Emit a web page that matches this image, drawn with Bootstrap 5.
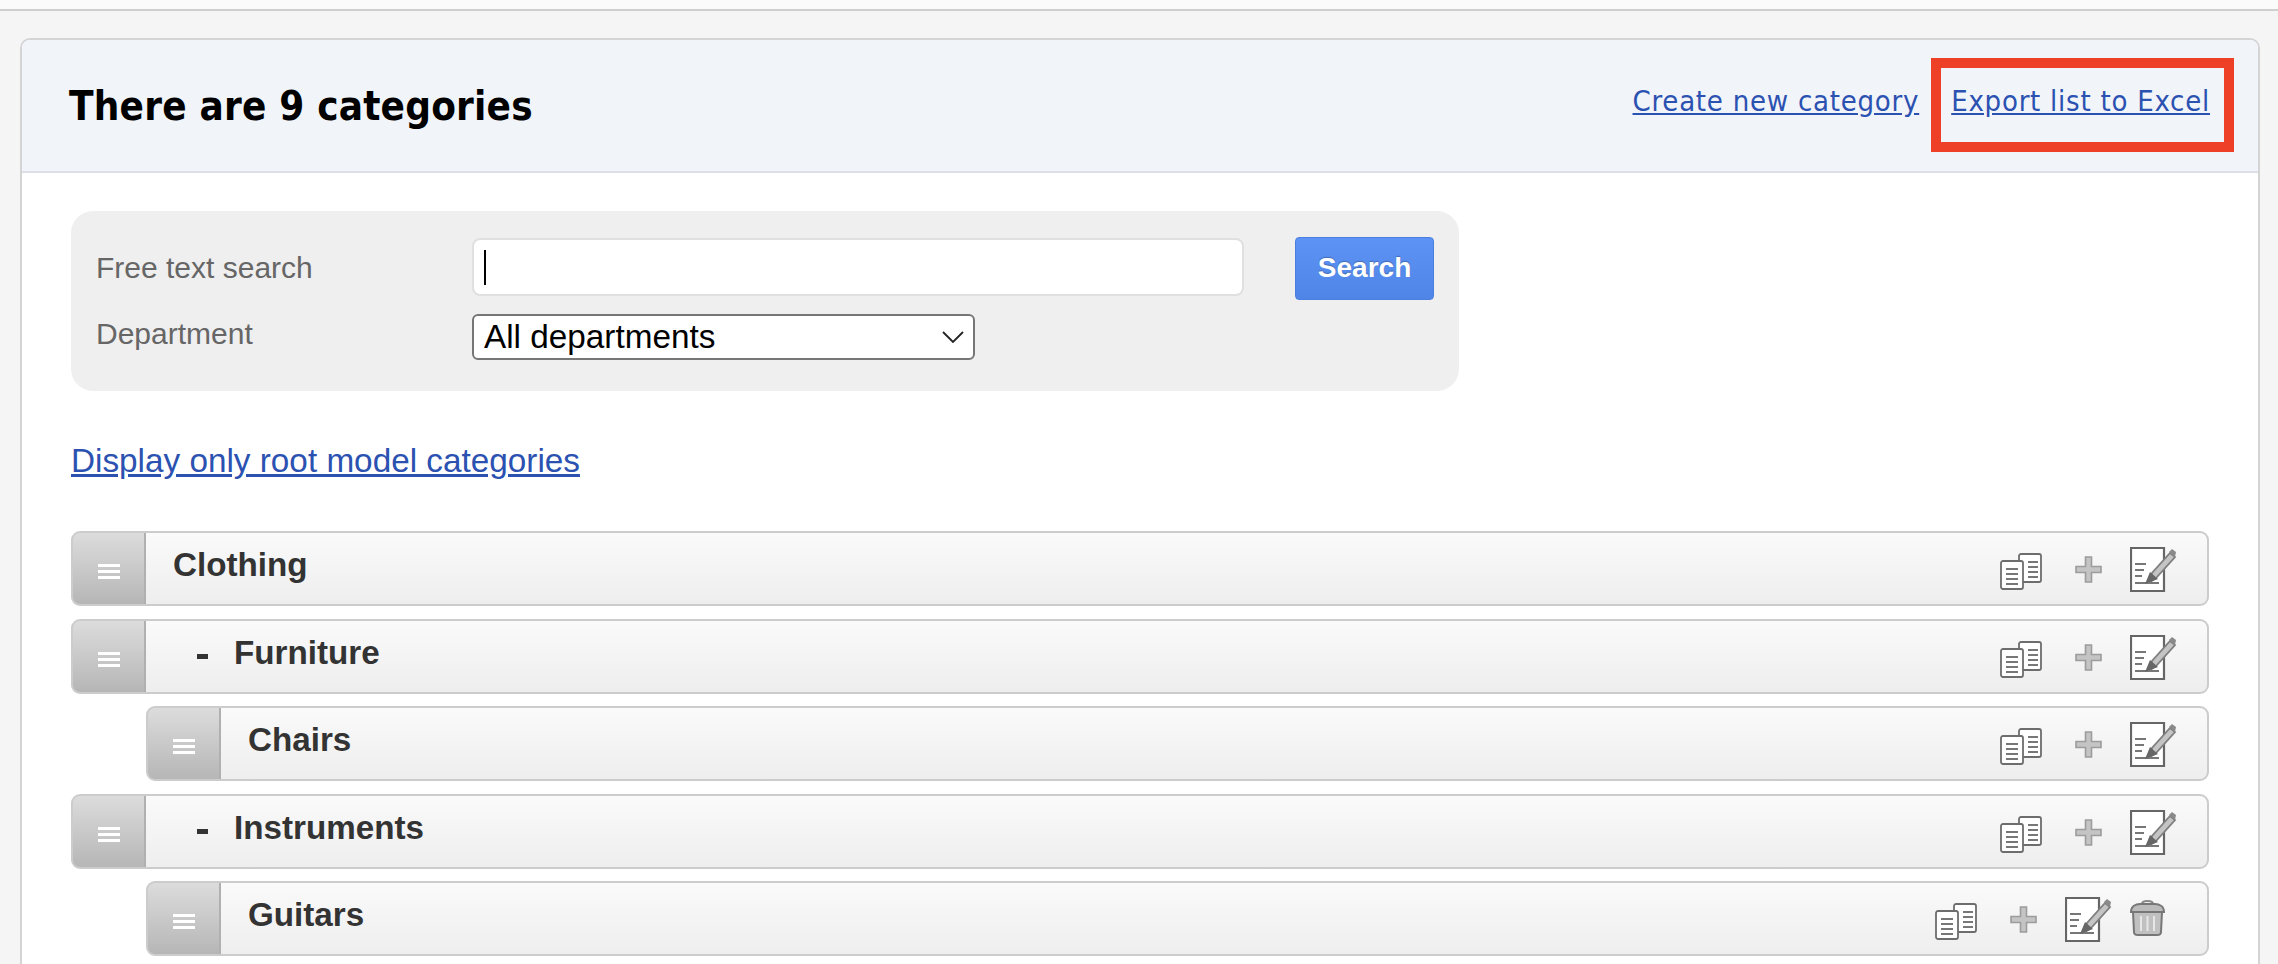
<!DOCTYPE html>
<html lang="en">
<head>
<meta charset="utf-8">
<title>Categories</title>
<link href="https://cdn.jsdelivr.net/npm/bootstrap@5.3.0/dist/css/bootstrap.min.css" rel="stylesheet">
<style>
html,body{height:964px;overflow:hidden}
body{background:#f5f5f5;font-family:"Liberation Sans",Arial,sans-serif;color:#333}
.topstrip{height:11px;background:#fbfbfb;border-bottom:2px solid #cfcfcf}
.shell{margin:27px 18px 0 20px;height:1200px;border:2px solid #d4d4d4;border-radius:10px;background:#fff;--bs-card-inner-border-radius:8px}
.shell>.card-header{height:133px;background:#f1f4f9;border-bottom:2px solid #dcdfe7;padding:0 48px 0 47px;position:relative}
.pagetitle{font-family:"DejaVu Sans Condensed","DejaVu Sans",sans-serif;font-stretch:condensed;font-weight:700;font-size:40px;letter-spacing:.2px;color:#000;margin:0;line-height:1;position:relative}
.headlinks a,.rootlink{color:#2b51b1}
.headlinks{font-family:"DejaVu Sans Condensed","DejaVu Sans",sans-serif;font-stretch:condensed;font-size:29px;letter-spacing:.75px;gap:32px;margin-top:-8px}
.redmark{position:absolute;right:24px;top:18px;width:303px;height:94px;border:10px solid #ee4027;pointer-events:none}
.shell>.card-body{padding:38px 49px 0 49px}
.filterbox{width:1388px;height:180px;background:#efefef;border-radius:22px;padding:27px 25px 0}
.flabel{width:376px;font-size:30px;line-height:34px;color:#666}
.flabel.first{margin-top:13px}
.flabel.second{margin-top:3px}
.fieldwrap{position:relative;width:773px;height:58px;margin-right:51px}
.fieldwrap .form-control{height:58px;border:2px solid #e0e0e0;border-radius:8px}
.caretbar{position:absolute;left:12px;top:12px;width:2px;height:35px;background:#000}
.gobtn{width:139px;height:63px;background:linear-gradient(#5c93f5,#4f85e6);border:1px solid #4a7fe0;border-radius:4px;color:#fff;font-weight:700;font-size:28px;padding:0 0 2px;margin-top:-1px;text-shadow:0 -1px 1px rgba(0,0,0,.25)}
.formgap{margin-bottom:14px}
.deptsel.form-select{width:503px;height:46px;border:2px solid #767676;border-radius:6px;padding:0 10px;font-size:33.300px;line-height:42px;color:#000;background-position:right 8px center;background-size:24px 12px;background-image:url("data:image/svg+xml,%3Csvg xmlns='http://www.w3.org/2000/svg' viewBox='0 0 24 12'%3E%3Cpath d='M2 1l10 10L22 1' fill='none' stroke='%23222' stroke-width='1.8'/%3E%3C/svg%3E")}
.rootlink{display:inline-block;font-size:33.300px;line-height:36px;margin:52px 0 52px}
.treerow{display:flex;height:75px;margin-bottom:12.5px;border:2px solid #ccc;border-radius:9px;background:linear-gradient(#fafafa,#eeeeee);overflow:hidden}
.treerow.subrow{margin-left:75px}
.grip{margin:-2px 0 -2px -2px;flex:0 0 75px;background:linear-gradient(#dcdcdc,#b6b6b6);border:2px solid #b0b0b0;border-radius:9px 0 0 9px;display:flex;flex-direction:column;align-items:center;justify-content:center;gap:3px;padding-top:6px}
.grip i{display:block;width:22px;height:3px;background:#fff}
.treename{font-weight:700;font-size:33.200px;line-height:1;color:#333;padding:0 0 7px 27px;flex-grow:1;display:flex;align-items:center}
.treename.indented{padding-left:51px}
.treename .dashmark{display:inline-block;width:11px;height:5px;background:#333;margin:8px 26px 0 0}
.tools{display:flex;align-items:flex-start;padding:14px 30px 0 0}
.tools svg{display:block;filter:blur(.45px)}
.ic-copy{margin-top:6px;margin-right:33px}
.ic-plus{margin-top:9px;margin-right:28px}
.ic-edit{margin-right:0}
.ic-trash{margin-left:18px;margin-top:2px;margin-right:12px}
</style>
</head>
<body>
<svg width="0" height="0" class="position-absolute">
  <defs>
    <symbol id="s-copy" viewBox="0 0 42 37">
      <rect x="19" y="1" width="22" height="28" rx="2" fill="#fff" stroke="#6d6d6d" stroke-width="1.8"/>
      <path d="M28 9h10M28 14h10M28 19h10M28 24h10" stroke="#777" stroke-width="1.8"/>
      <rect x="1" y="8" width="22" height="28" rx="2" fill="#fff" stroke="#6d6d6d" stroke-width="1.8"/>
      <path d="M6 16h12M6 21h12M6 26h12M6 31h12" stroke="#777" stroke-width="1.8"/>
    </symbol>
    <symbol id="s-plus" viewBox="0 0 27 27">
      <path d="M10.500 1h6v9.500H26v6h-9.500V26h-6v-9.500H1v-6h9.500z" fill="#c4c4c4" stroke="#9c9c9c" stroke-width="1.6"/>
    </symbol>
    <symbol id="s-edit" viewBox="0 0 47 45">
      <path d="M33 1H1v43h33V1z" fill="#fff" stroke="#666" stroke-width="2.2"/>
      <path d="M5 17h11M5 23h9M5 29h7M5 36h24" stroke="#777" stroke-width="1.8"/>
      <path d="M20 35l2-9L40 6l5 4-19 21z" fill="#c4c4c4" stroke="#808080" stroke-width="1.8"/>
      <path d="M15 37l5-12 8 7z" fill="#666"/>
      <path d="M39 5l3-3 4 3-1 5z" fill="#8a8a8a"/>
    </symbol>
    <symbol id="s-trash" viewBox="0 0 35 37">
      <path d="M12 5c0-4 11-4 11 0" fill="none" stroke="#888" stroke-width="2"/>
      <path d="M1 13c0-6 5-8 9-8h15c4 0 9 2 9 8z" fill="#bbb" stroke="#777" stroke-width="2"/>
      <path d="M3 13h29l-1 20c0 2-2 3-4 3H8c-2 0-4-1-4-3z" fill="#c0c0c0" stroke="#777" stroke-width="2"/>
      <path d="M11 17v15M17.500 17v15M24 17v15" stroke="#e6e6e6" stroke-width="2"/>
    </symbol>
  </defs>
</svg>

<div class="topstrip"></div>
<div class="card shell">
  <div class="card-header d-flex justify-content-between align-items-center">
    <h1 class="pagetitle">There are 9 categories</h1>
    <div class="headlinks d-flex">
      <a href="#">Create new category</a>
      <a href="#">Export list to Excel</a>
    </div>
    <span class="redmark"></span>
  </div>
  <div class="card-body">
    <form class="filterbox">
      <div class="d-flex align-items-start formgap">
        <label class="flabel first" for="q">Free text search</label>
        <div class="fieldwrap"><input id="q" class="form-control" type="text"><span class="caretbar"></span></div>
        <button type="button" class="btn gobtn">Search</button>
      </div>
      <div class="d-flex align-items-start">
        <label class="flabel second" for="dept">Department</label>
        <select id="dept" class="form-select deptsel"><option>All departments</option></select>
      </div>
    </form>
    <a class="rootlink" href="#">Display only root model categories</a>

    <div class="treerow">
      <div class="grip"><i></i><i></i><i></i></div>
      <div class="treename">Clothing</div>
      <div class="tools">
        <svg class="ic-copy" width="42" height="37"><use href="#s-copy"/></svg>
        <svg class="ic-plus" width="27" height="27"><use href="#s-plus"/></svg>
        <svg class="ic-edit" width="47" height="45"><use href="#s-edit"/></svg>
      </div>
    </div>
    <div class="treerow">
      <div class="grip"><i></i><i></i><i></i></div>
      <div class="treename indented"><span class="dashmark"></span>Furniture</div>
      <div class="tools">
        <svg class="ic-copy" width="42" height="37"><use href="#s-copy"/></svg>
        <svg class="ic-plus" width="27" height="27"><use href="#s-plus"/></svg>
        <svg class="ic-edit" width="47" height="45"><use href="#s-edit"/></svg>
      </div>
    </div>
    <div class="treerow subrow">
      <div class="grip"><i></i><i></i><i></i></div>
      <div class="treename">Chairs</div>
      <div class="tools">
        <svg class="ic-copy" width="42" height="37"><use href="#s-copy"/></svg>
        <svg class="ic-plus" width="27" height="27"><use href="#s-plus"/></svg>
        <svg class="ic-edit" width="47" height="45"><use href="#s-edit"/></svg>
      </div>
    </div>
    <div class="treerow">
      <div class="grip"><i></i><i></i><i></i></div>
      <div class="treename indented"><span class="dashmark"></span>Instruments</div>
      <div class="tools">
        <svg class="ic-copy" width="42" height="37"><use href="#s-copy"/></svg>
        <svg class="ic-plus" width="27" height="27"><use href="#s-plus"/></svg>
        <svg class="ic-edit" width="47" height="45"><use href="#s-edit"/></svg>
      </div>
    </div>
    <div class="treerow subrow">
      <div class="grip"><i></i><i></i><i></i></div>
      <div class="treename">Guitars</div>
      <div class="tools">
        <svg class="ic-copy" width="42" height="37"><use href="#s-copy"/></svg>
        <svg class="ic-plus" width="27" height="27"><use href="#s-plus"/></svg>
        <svg class="ic-edit" width="47" height="45"><use href="#s-edit"/></svg>
        <svg class="ic-trash" width="35" height="37"><use href="#s-trash"/></svg>
      </div>
    </div>
  </div>
</div>
<script src="https://cdn.jsdelivr.net/npm/bootstrap@5.3.0/dist/js/bootstrap.bundle.min.js"></script>
</body>
</html>
